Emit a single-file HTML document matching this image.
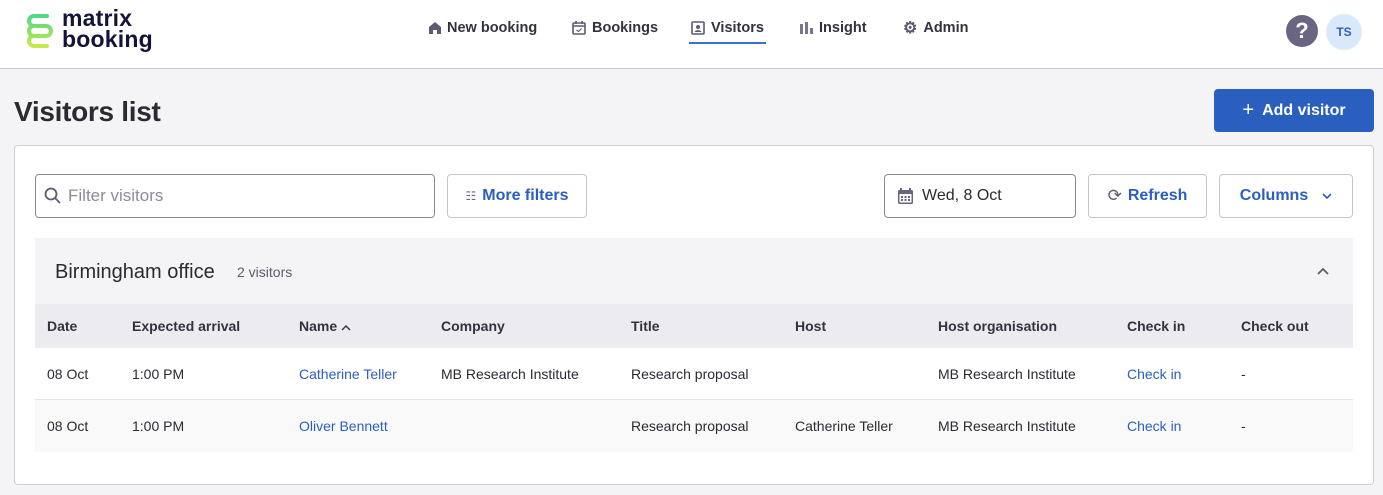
<!DOCTYPE html>
<html><head><meta charset="utf-8"><style>
*{box-sizing:border-box;margin:0;padding:0}
body{width:1383px;height:495px;background:#f4f4f6;font-family:"Liberation Sans",sans-serif;color:#2a2a33;position:relative;overflow:hidden}
.hdr{position:absolute;left:0;top:0;width:1383px;height:69px;background:#fff;border-bottom:1px solid #c9c9d9}
.abs{position:absolute}
.nav{position:absolute;top:20px;font-size:14.5px;font-weight:bold;color:#33333d;display:flex;align-items:center;gap:6px;height:16px}
.btn{position:absolute;border:1px solid #c4c4d0;border-radius:4px;background:#fff;display:flex;align-items:center;justify-content:center;font-size:16px;font-weight:bold;color:#2b5fbf;gap:6px}
.th,.td{position:absolute;font-size:14px}
.th{font-weight:bold;color:#33333d}
.lnk{color:#2b5fbf}
</style></head><body>
<div class="hdr">
 <svg class="abs" style="left:25px;top:12px" width="30" height="40" viewBox="0 0 30 40">
  <defs><linearGradient id="g" x1="0" y1="0" x2="0" y2="1"><stop offset="0" stop-color="#4ed88a"/><stop offset="1" stop-color="#c6ea4a"/></linearGradient></defs>
  <path d="M22 4H9a5 5 0 0 0 0 10h12a5 5 0 0 1 0 10H9a5 5 0 0 0 0 10h13M9 14a5 5 0 0 0 0 10" fill="none" stroke="url(#g)" stroke-width="4" stroke-linecap="round"/>
 </svg>
 <div class="abs" style="left:62px;top:8px;font-size:23px;line-height:21px;color:#14143a;font-weight:bold;letter-spacing:0.2px">matrix<br>booking</div>
 <div class="nav" style="left:429px"><svg width="12" height="12" viewBox="0 0 12 12"><path d="M6 0L0 5v7h4V8h4v4h4V5z" fill="#5e5a72"/></svg>New booking</div>
 <div class="nav" style="left:572px"><svg width="14" height="14" viewBox="0 0 14 14"><rect x="1" y="2" width="12" height="11" rx="1" fill="none" stroke="#5e5a72" stroke-width="1.6"/><path d="M1 5h12M4 0v3M10 0v3" stroke="#5e5a72" stroke-width="1.6"/><path d="M4.5 9l2 1.5 3-3" fill="none" stroke="#5e5a72" stroke-width="1.2"/></svg>Bookings</div>
 <div class="nav" style="left:691px"><svg width="14" height="14" viewBox="0 0 14 14"><rect x="1" y="1" width="12" height="12" rx="1" fill="none" stroke="#5e5a72" stroke-width="1.6"/><circle cx="7" cy="6" r="2" fill="#5e5a72"/><path d="M3.5 11c1-2.5 6-2.5 7 0z" fill="#5e5a72"/></svg>Visitors</div>
 <div class="abs" style="left:689px;top:42px;width:77px;height:2px;background:#3b6fd0"></div>
 <div class="nav" style="left:800px"><svg width="13" height="12" viewBox="0 0 13 12"><rect x="0" y="2" width="3" height="10" fill="#7a768c"/><rect x="5" y="0" width="3" height="12" fill="#7a768c"/><rect x="10" y="6" width="3" height="6" fill="#7a768c"/></svg>Insight</div>
 <div class="nav" style="left:903px"><span style="font-size:16px;color:#5e5a72">⚙</span>Admin</div>
 <div class="abs" style="left:1286px;top:15px;width:32px;height:32px;border-radius:50%;background:#6a6580;color:#fff;font-size:22px;font-weight:bold;text-align:center;line-height:32px">?</div>
 <div class="abs" style="left:1326px;top:14px;width:36px;height:36px;border-radius:50%;background:#d9e9fc;color:#2b5fbf;font-size:12px;font-weight:bold;text-align:center;line-height:36px">TS</div>
</div>
<div class="abs" style="left:14px;top:96px;font-size:28px;font-weight:bold;color:#2a2a33;letter-spacing:-0.3px">Visitors list</div>
<div class="abs" style="left:1214px;top:89px;width:160px;height:43px;background:#2b5fbf;border-radius:4px;color:#fff;font-size:16px;font-weight:bold;display:flex;align-items:center;justify-content:center;gap:8px"><span style="font-size:20px;font-weight:normal">+</span>Add visitor</div>
<div class="abs" style="left:14px;top:145px;width:1360px;height:340px;background:#fff;border:1px solid #cfcfd9;border-radius:4px"></div>
<div class="btn" style="left:35px;top:174px;width:400px;height:44px;border-color:#8a86a0;justify-content:flex-start;padding-left:8px;font-weight:normal;color:#8d8d99;font-size:17px"><svg width="18" height="18" viewBox="0 0 18 18"><circle cx="7" cy="7" r="5.5" fill="none" stroke="#5e5a72" stroke-width="1.8"/><path d="M11 11l5 5" stroke="#5e5a72" stroke-width="1.8"/></svg>Filter visitors</div>
<div class="btn" style="left:447px;top:174px;width:140px;height:44px"><span style="font-size:12px;color:#6a6580;font-weight:normal">☷</span>More filters</div>
<div class="btn" style="left:884px;top:174px;width:192px;height:44px;border-color:#8a86a0;justify-content:flex-start;padding-left:12px;font-weight:normal;color:#2a2a33;gap:8px"><svg width="17" height="17" viewBox="0 0 17 17"><rect x="1" y="2" width="15" height="14" rx="1.5" fill="#6a6580"/><rect x="2.5" y="6" width="12" height="8.5" fill="#fff"/><path d="M4 0v3M13 0v3" stroke="#6a6580" stroke-width="2"/><g fill="#6a6580"><rect x="4" y="8" width="2" height="2"/><rect x="7.5" y="8" width="2" height="2"/><rect x="11" y="8" width="2" height="2"/><rect x="4" y="11" width="2" height="2"/><rect x="7.5" y="11" width="2" height="2"/><rect x="11" y="11" width="2" height="2"/></g></svg>Wed, 8 Oct</div>
<div class="btn" style="left:1088px;top:174px;width:119px;height:44px"><span style="color:#5e5a72;font-size:17px;font-weight:normal">⟳</span>Refresh</div>
<div class="btn" style="left:1219px;top:174px;width:134px;height:44px;gap:14px">Columns<svg width="10" height="6" viewBox="0 0 10 6"><path d="M1 1l4 4 4-4" fill="none" stroke="#2b5fbf" stroke-width="1.6"/></svg></div>
<div class="abs" style="left:35px;top:238px;width:1318px;height:66px;background:#f4f4f6"></div>
<div class="abs" style="left:55px;top:261px;font-size:20px;color:#2a2a33">Birmingham office</div>
<div class="abs" style="left:237px;top:264px;font-size:14px;color:#5e5a72">2 visitors</div>
<svg class="abs" style="left:1317px;top:267px" width="12" height="8" viewBox="0 0 12 8"><path d="M1 7l5-5 5 5" fill="none" stroke="#5e5a72" stroke-width="1.8"/></svg>
<div class="abs" style="left:35px;top:304px;width:1318px;height:44px;background:#ebebf0"></div>
<div class="abs" style="left:35px;top:399px;width:1318px;height:1px;background:#e4e4ea"></div>
<div class="abs" style="left:35px;top:400px;width:1318px;height:52px;background:#f9f9fa"></div>
<div class="th" style="left:47px;top:318px">Date</div>
<div class="th" style="left:132px;top:318px">Expected arrival</div>
<div class="th" style="left:299px;top:318px">Name <svg width="10" height="7" viewBox="0 0 10 7"><path d="M1 6l4-4 4 4" fill="none" stroke="#33333d" stroke-width="1.4"/></svg></div>
<div class="th" style="left:441px;top:318px">Company</div>
<div class="th" style="left:631px;top:318px">Title</div>
<div class="th" style="left:795px;top:318px">Host</div>
<div class="th" style="left:938px;top:318px">Host organisation</div>
<div class="th" style="left:1127px;top:318px">Check in</div>
<div class="th" style="left:1241px;top:318px">Check out</div>
<div class="td" style="left:47px;top:366px">08 Oct</div>
<div class="td" style="left:132px;top:366px">1:00 PM</div>
<div class="td lnk" style="left:299px;top:366px">Catherine Teller</div>
<div class="td" style="left:441px;top:366px">MB Research Institute</div>
<div class="td" style="left:631px;top:366px">Research proposal</div>
<div class="td" style="left:938px;top:366px">MB Research Institute</div>
<div class="td lnk" style="left:1127px;top:366px">Check in</div>
<div class="td" style="left:1241px;top:366px">-</div>
<div class="td" style="left:47px;top:418px">08 Oct</div>
<div class="td" style="left:132px;top:418px">1:00 PM</div>
<div class="td lnk" style="left:299px;top:418px">Oliver Bennett</div>
<div class="td" style="left:631px;top:418px">Research proposal</div>
<div class="td" style="left:795px;top:418px">Catherine Teller</div>
<div class="td" style="left:938px;top:418px">MB Research Institute</div>
<div class="td lnk" style="left:1127px;top:418px">Check in</div>
<div class="td" style="left:1241px;top:418px">-</div>
</body></html>
